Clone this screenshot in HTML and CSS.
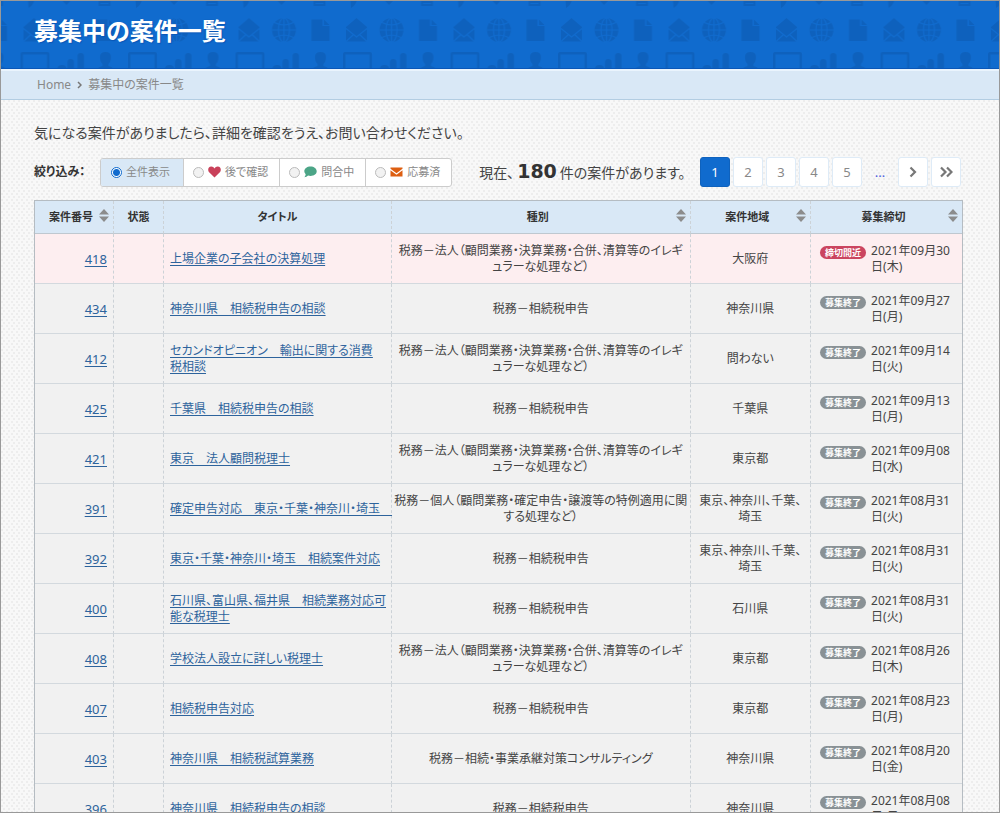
FILE: index.html
```html
<!DOCTYPE html>
<html lang="ja">
<head>
<meta charset="utf-8">
<meta name="viewport" content="width=device-width, initial-scale=1">
<title>募集中の案件一覧</title>
<link rel="stylesheet" href="styles.css">
</head>
<body>
<svg class="defs" width="0" height="0" aria-hidden="true">
  <symbol id="sort" viewBox="0 0 10 13"><path d="M0 5.5 5 0l5 5.5zM0 7.5h10L5 13z" fill="currentColor"/></symbol>
</svg>
<div class="page">
  <header class="hero">
    <svg class="hero-pattern" width="100%" height="100%" aria-hidden="true">
      <defs>
        <pattern id="icons" x="22.500" y="-1" width="107.5" height="120" patternUnits="userSpaceOnUse">
          <g fill="#0e61bd">
            <path d="M4.500 0h6.500q-1 5-6 8z"/>
            <path d="M38 0h10l-5 5z"/>
            <path d="M75 0h12v6H75zm2 3h8v1h-8z" fill-rule="evenodd"/>
            <path d="M0 27 10.500 18 21 27v14.500H0z"/>
            <circle cx="45.500" cy="30" r="12"/>
            <path d="M73 19.500h11v6.500h7v15H73zM85.500 19.500l5.500 5.500h-5.500z"/>
            <path d="M-3 71V54q0-2 2-2h25q2 0 2 2v17h-2.500V54.500h-24V71z"/>
            <path d="M104.500 71V54q0-2 2-2h2v2.500h-1.500V71z"/>
            <rect x="34" y="65" width="9" height="10" rx="4"/>
            <rect x="44" y="59" width="6.500" height="14" rx="3"/>
            <rect x="54" y="53" width="6.500" height="20" rx="3"/>
            <path d="M76.500 57q0-5 5.500-5t5.500 5q0 5-2.500 7v2q5 1 5 4H74q0-3 5-4v-2q-2.500-2-2.500-7z"/>
          </g>
          <g fill="none" stroke="#106bce" stroke-width="1.200">
            <path d="M0 28.500 10.500 37 21 28.500M0 41.500l7.500-7M21 41.500l-7.500-7"/>
            <path d="M45.500 18v24M33.500 30h24M36 22.500q9.500 5 19 0M36 37.500q9.500-5 19 0"/>
            <ellipse cx="45.500" cy="30" rx="5.500" ry="12"/>
          </g>
        </pattern>
      </defs>
      <rect width="100%" height="100%" fill="url(#icons)"/>
    </svg>
    <h1 class="hero-title">募集中の案件一覧</h1>
  </header>
  <nav class="breadcrumb" aria-label="breadcrumb">
    <a href="#">Home</a>
    <svg width="5" height="8" viewBox="0 0 5 8" aria-hidden="true"><path d="m1 1 3 3-3 3" fill="none" stroke="#777" stroke-width="1.500"/></svg>
    <span>募集中の案件一覧</span>
  </nav>
  <main class="content">
    <p class="intro">気になる案件がありましたら、詳細を確認をうえ、お問い合わせください。</p>
    <div class="toolbar">
      <span class="filter-title">絞り込み：</span>
      <div class="filters" role="radiogroup" aria-label="絞り込み">
        <label class="filter"><input type="radio" name="f" checked><span>全件表示</span></label>
        <label class="filter"><input type="radio" name="f"><svg width="13" height="12" viewBox="0 0 13 12" aria-hidden="true"><path d="M6.500 11.500.9 5.900C-.5 4.200.1.500 3.300.5c1.500 0 2.500.8 3.200 1.900C7.200 1.300 8.200.5 9.700.5c3.200 0 3.800 3.700 2.400 5.400z" fill="#c9415a"/></svg><span>後で確認</span></label>
        <label class="filter"><input type="radio" name="f"><svg width="13" height="12" viewBox="0 0 13 12" aria-hidden="true"><path d="M6.500.5C10 .5 12.700 2.600 12.700 5.300S10 10 6.500 10q-1.300 0-2.400-.4Q2.500 11.300.4 11.300q1.200-1.400 1.300-3Q.3 7 .3 5.300C.3 2.600 3 .5 6.500.5z" fill="#4ca587"/></svg><span>問合中</span></label>
        <label class="filter"><input type="radio" name="f"><svg width="13" height="12" viewBox="0 0 13 12" aria-hidden="true"><path d="M.5 1.500h12v1.300L6.500 7.300.5 2.800zM.5 4.300l6 4.500 6-4.500v6.200H.5z" fill="#dd5f12"/></svg><span>応募済</span></label>
      </div>
      <p class="count">現在、<strong>180</strong>件の案件があります。</p>
      <nav class="pager" aria-label="pagination">
        <a class="page-link current" href="#" aria-current="page">1</a>
        <a class="page-link" href="#">2</a>
        <a class="page-link" href="#">3</a>
        <a class="page-link" href="#">4</a>
        <a class="page-link" href="#">5</a>
        <span class="ellipsis">...</span>
        <a class="page-link" href="#" aria-label="次へ"><svg width="8" height="12" viewBox="0 0 8 12"><path d="m1.500 1.500 4.500 4.500-4.500 4.500" fill="none" stroke="#777" stroke-width="2.200"/></svg></a>
        <a class="page-link" href="#" aria-label="最後へ"><svg width="13" height="12" viewBox="0 0 13 12"><path d="M1 1.500 5.500 6 1 10.500M7 1.500 11.500 6 7 10.500" fill="none" stroke="#777" stroke-width="2.200"/></svg></a>
      </nav>
    </div>
    <table class="cases">
      <colgroup><col class="c-id"><col class="c-state"><col class="c-title"><col class="c-kind"><col class="c-area"><col class="c-due"></colgroup>
      <thead>
        <tr>
          <th scope="col"><button class="sort" type="button"><span>案件番号</span><svg width="10" height="13"><use href="#sort"/></svg></button></th>
          <th scope="col">状態</th>
          <th scope="col">タイトル</th>
          <th scope="col"><button class="sort" type="button"><span>種別</span><svg width="10" height="13"><use href="#sort"/></svg></button></th>
          <th scope="col"><button class="sort" type="button"><span>案件地域</span><svg width="10" height="13"><use href="#sort"/></svg></button></th>
          <th scope="col"><button class="sort" type="button"><span>募集締切</span><svg width="10" height="13"><use href="#sort"/></svg></button></th>
        </tr>
      </thead>
      <tbody>
        <tr class="urgent"><td class="id"><a href="#">418</a></td><td></td><td class="title"><a href="#">上場企業の子会社の決算処理</a></td><td class="kind">税務－法人（顧問業務・決算業務・合併、清算等のイレギ<wbr>ュラーな処理など）</td><td class="area">大阪府</td><td><div class="due"><span class="badge hot">締切間近</span><time>2021年09月30日(木)</time></div></td></tr>
        <tr><td class="id"><a href="#">434</a></td><td></td><td class="title"><a href="#">神奈川県　相続税申告の相談</a></td><td class="kind">税務－相続税申告</td><td class="area">神奈川県</td><td><div class="due"><span class="badge">募集終了</span><time>2021年09月27日(月)</time></div></td></tr>
        <tr><td class="id"><a href="#">412</a></td><td></td><td class="title"><a href="#">セカンドオピニオン　輸出に関する消費<br>税相談</a></td><td class="kind">税務－法人（顧問業務・決算業務・合併、清算等のイレギ<wbr>ュラーな処理など）</td><td class="area">問わない</td><td><div class="due"><span class="badge">募集終了</span><time>2021年09月14日(火)</time></div></td></tr>
        <tr><td class="id"><a href="#">425</a></td><td></td><td class="title"><a href="#">千葉県　相続税申告の相談</a></td><td class="kind">税務－相続税申告</td><td class="area">千葉県</td><td><div class="due"><span class="badge">募集終了</span><time>2021年09月13日(月)</time></div></td></tr>
        <tr><td class="id"><a href="#">421</a></td><td></td><td class="title"><a href="#">東京　法人顧問税理士</a></td><td class="kind">税務－法人（顧問業務・決算業務・合併、清算等のイレギ<wbr>ュラーな処理など）</td><td class="area">東京都</td><td><div class="due"><span class="badge">募集終了</span><time>2021年09月08日(水)</time></div></td></tr>
        <tr><td class="id"><a href="#">391</a></td><td></td><td class="title"><a href="#">確定申告対応　東京・千葉・神奈川・埼玉　</a></td><td class="kind">税務－個人（顧問業務・確定申告・譲渡等の特例適用に関<wbr>する処理など）</td><td class="area">東京、神奈川、千葉、埼玉</td><td><div class="due"><span class="badge">募集終了</span><time>2021年08月31日(火)</time></div></td></tr>
        <tr><td class="id"><a href="#">392</a></td><td></td><td class="title"><a href="#">東京・千葉・神奈川・埼玉　相続案件対応</a></td><td class="kind">税務－相続税申告</td><td class="area">東京、神奈川、千葉、埼玉</td><td><div class="due"><span class="badge">募集終了</span><time>2021年08月31日(火)</time></div></td></tr>
        <tr><td class="id"><a href="#">400</a></td><td></td><td class="title"><a href="#">石川県、富山県、福井県　相続業務対応可能な税理士</a></td><td class="kind">税務－相続税申告</td><td class="area">石川県</td><td><div class="due"><span class="badge">募集終了</span><time>2021年08月31日(火)</time></div></td></tr>
        <tr><td class="id"><a href="#">408</a></td><td></td><td class="title"><a href="#">学校法人設立に詳しい税理士</a></td><td class="kind">税務－法人（顧問業務・決算業務・合併、清算等のイレギ<wbr>ュラーな処理など）</td><td class="area">東京都</td><td><div class="due"><span class="badge">募集終了</span><time>2021年08月26日(木)</time></div></td></tr>
        <tr><td class="id"><a href="#">407</a></td><td></td><td class="title"><a href="#">相続税申告対応</a></td><td class="kind">税務－相続税申告</td><td class="area">東京都</td><td><div class="due"><span class="badge">募集終了</span><time>2021年08月23日(月)</time></div></td></tr>
        <tr><td class="id"><a href="#">403</a></td><td></td><td class="title"><a href="#">神奈川県　相続税試算業務</a></td><td class="kind">税務－相続・事業承継対策コンサルティング</td><td class="area">神奈川県</td><td><div class="due"><span class="badge">募集終了</span><time>2021年08月20日(金)</time></div></td></tr>
        <tr><td class="id"><a href="#">396</a></td><td></td><td class="title"><a href="#">神奈川県　相続税申告の相談</a></td><td class="kind">税務－相続税申告</td><td class="area">神奈川県</td><td><div class="due"><span class="badge">募集終了</span><time>2021年08月08日(日)</time></div></td></tr>
      </tbody>
    </table>
  </main>
</div>
</body>
</html>
```
FILE: styles.css
```css
* { box-sizing: border-box; }

body {
  margin: 0;
  font-family: "Noto Sans", "Noto Sans CJK JP", sans-serif;
  font-size: 12px;
  line-height: 16px;
  font-feature-settings: "palt";
  color: #444;
}

p, h1 { margin: 0; }

.defs { display: block; }

.page {
  height: 100vh;
  overflow: auto;
  scrollbar-width: none;
  border: 1px solid #999;
  background-color: #f8f8f8;
  background-image:
    radial-gradient(circle at 1px 1px, #ededed 1px, transparent 1px),
    radial-gradient(circle at 1px 1px, #ededed 1px, transparent 1px);
  background-size: 5px 6px;
  background-position: 0 0, 2px 3px;
}

.hero {
  position: relative;
  padding: 12px 33px 20px;
  background: #106bce;
  border-bottom: 1px solid #0a57b8;
}

.hero-pattern {
  position: absolute;
  inset: 0;
}

.hero-title {
  position: relative;
  font-size: 24px;
  line-height: 35px;
  font-weight: 700;
  color: #fff;
  text-shadow: 1px 1px 1px #0a57b8;
}

.breadcrumb {
  display: flex;
  align-items: center;
  gap: 6px;
  padding: 6px 36px;
  background: #d9e8f6;
  border-top: 2px solid #eaf4fd;
  border-bottom: 1px solid #b3cde2;
  color: #888;
}

.breadcrumb a { color: inherit; text-decoration: none; }

.content { padding: 23px 36px 24px 33px; }

.intro { font-size: 14px; line-height: 20px; }

.toolbar {
  display: flex;
  align-items: center;
  margin: 14px 0 13px;
}

.filter-title {
  width: 66px;
  font-weight: 700;
  white-space: nowrap;
  color: #333;
}

.filters {
  display: flex;
  border: 1px solid #ccc;
  border-radius: 3px;
  background: #fff;
  overflow: hidden;
}

.filter {
  display: flex;
  align-items: center;
  gap: 4px;
  height: 27px;
  padding: 0 11px 0 9px;
  font-size: 11px;
  color: #888;
  white-space: nowrap;
}

.filter + .filter { border-left: 1px solid #ccc; }

.filter:has(input:checked) {
  background: #d9e8f6;
  padding: 0 13px 0 10px;
}

.filter input {
  appearance: none;
  flex: none;
  width: 11px;
  height: 11px;
  margin: 0;
  border: 1px solid #bbb;
  border-radius: 50%;
  background: #f2f2f2;
}

.filter input:checked {
  border-color: #106bce;
  background: radial-gradient(circle, #106bce 3px, #fff 4px);
}

.count {
  margin-left: 27px;
  font-size: 14px;
  line-height: 28px;
  white-space: nowrap;
}

.count strong {
  margin: 0 3px;
  font-family: "DejaVu Sans", sans-serif;
  font-size: 19px;
  color: #333;
}

.pager {
  display: flex;
  gap: 3px;
  margin: 0 2px 0 auto;
}

.page-link, .ellipsis {
  display: flex;
  align-items: center;
  justify-content: center;
  width: 30px;
  height: 30px;
  font-size: 13px;
  color: #888;
  text-decoration: none;
}

.page-link {
  background: #fff;
  border: 1px solid #deebf7;
  border-radius: 3px;
}

.page-link.current {
  background: #106bce;
  border-color: #0f62bd;
  color: #fff;
}

.ellipsis { color: #4a5ee0; }

.cases {
  width: 100%;
  table-layout: fixed;
  border-collapse: separate;
  border-spacing: 0;
  border: 1px solid #b5bcc2;
  background: #f1f1f1;
}

.c-id { width: 78px; }
.c-state { width: 50px; }
.c-title { width: 24.6%; }
.c-kind { width: 32.2%; }
.c-area { width: 13%; }

.cases th, .cases td {
  height: 50px;
  padding: 0 6px;
  border-bottom: 1px solid #d3d9de;
  border-left: 1px dashed #ccd2d7;
  vertical-align: middle;
}

.cases th:first-child, .cases td:first-child { border-left: 0; }

.cases th {
  height: 33px;
  padding: 0 4px;
  background: #d9e8f6;
  border-bottom-color: #bfc8d0;
  font-size: 11px;
  font-weight: 700;
  color: #333;
}

.sort {
  display: flex;
  align-items: center;
  width: 100%;
  padding: 0 0 0 4px;
  border: 0;
  background: none;
  font: inherit;
  font-feature-settings: inherit;
  color: inherit;
}

.sort span { flex: 1; }

.sort svg {
  margin-bottom: 3px;
  color: #8c8c8c;
}

.cases .urgent td { background: #fdeef0; }

.cases .id {
  text-align: right;
  font-size: 13px;
}

.cases a { color: #2d639c; text-underline-offset: 2px; }

.cases .title { padding-right: 0; }

.cases .kind { padding: 0 2px; text-align: center; }

.cases .area { padding: 0 4px; text-align: center; }

.due {
  display: flex;
  align-items: flex-start;
  gap: 5px;
  padding-left: 3px;
}

.badge {
  flex: none;
  margin-top: 3px;
  padding: 0 5px;
  border-radius: 7px;
  background: #899195;
  font-size: 9px;
  line-height: 13px;
  font-weight: 700;
  color: #fff;
}

.badge.hot { background: #cb4560; }
```
